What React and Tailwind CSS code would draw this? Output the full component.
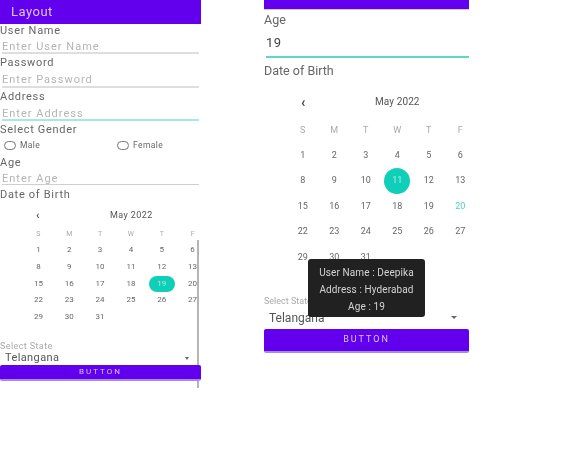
const weekdays = ["S", "M", "T", "W", "T", "F"];
const days = [
	[1, 2, 3, 4, 5, 6],
	[8, 9, 10, 11, 12, 13],
	[15, 16, 17, 18, 19, 20],
	[22, 23, 24, 25, 26, 27],
	[29, 30, 31],
];

function Field({ label, placeholder, line = "h-[2px] bg-[#dedede]", labelClass = "", inputClass }) {
	return (
		<div>
			<div className={`${labelClass} flex h-[12px] items-center pt-[2px] text-[11px] tracking-[0.7px] text-[#666]`}>
				{label}
			</div>
			<div className={`${inputClass} flex items-center pl-[2px] pt-[2px] text-[11px] tracking-[1px] text-[#b5b5b5]`}>
				{placeholder}
			</div>
			<div className={`mx-[2px] ${line}`} />
		</div>
	);
}

function Button({ className }) {
	return (
		<div
			className={`relative flex items-center justify-center rounded-[2px] border-b-2 border-[#a98ae8] bg-[#6200ee] text-[#d9c6f7] ${className}`}
		>
			BUTTON
		</div>
	);
}

function LeftCalendar() {
	return (
		<div className="w-[198px] overflow-hidden">
			<div className="flex h-[24px] w-[185px] items-center pt-[3px] text-[9px] text-[#555]">
				<span className="ml-[36px] w-[74px] text-[11px] font-bold leading-none">‹</span>
				<span className="tracking-[0.4px]">May 2022</span>
			</div>
			<div className="ml-[23px] grid h-[16px] w-[185px] grid-cols-6 items-center text-center text-[7px] text-[#aaa]">
				{weekdays.map((d, i) => (
					<span key={i}>{d}</span>
				))}
			</div>
			<div className="ml-[23px] grid w-[185px] grid-cols-6 grid-rows-[repeat(5,16.7px)] items-center text-center text-[8px] text-[#666]">
				{days.flat().map((d) => (
					<div key={d} className="relative flex h-full items-center justify-center">
						{d === 19 && <span className="absolute h-[16px] w-[26px] rounded-full bg-[#0fcfb8]" />}
						<span className={`relative ${d === 19 ? "text-[#a9ece3]" : ""}`}>{d}</span>
					</div>
				))}
			</div>
		</div>
	);
}

function RightCalendar() {
	return (
		<div className="pl-[23px]">
			<div className="flex h-[22px] items-center text-[10px] text-[#555]">
				<span className="ml-[14px] w-[74px] text-[14px] font-bold leading-none text-[#444]">‹</span>
				<span className="tracking-[0.1px]">May 2022</span>
			</div>
			<div className="mt-[8px] grid h-[20px] w-[189px] grid-cols-6 items-center text-center text-[9px] text-[#aaa]">
				{weekdays.map((d, i) => (
					<span key={i}>{d}</span>
				))}
			</div>
			<div className="mt-[2px] grid w-[189px] grid-cols-6 grid-rows-[repeat(5,25.5px)] items-center text-center text-[9px] text-[#666]">
				{days.flat().map((d) => (
					<div key={d} className="relative flex h-full items-center justify-center">
						{d === 11 && <span className="absolute h-[26px] w-[26px] rounded-full bg-[#0fcfb8]" />}
						<span className={`relative ${d === 11 ? "text-[#a9ece3]" : d === 20 ? "text-[#4ecfc0]" : ""}`}>{d}</span>
					</div>
				))}
			</div>
		</div>
	);
}

export default function App() {
	return (
		<div className="flex h-[452px] w-[571px] gap-[63px] overflow-hidden bg-white font-['Roboto',sans-serif] blur-[0.4px]">
			<div className="relative h-[388px] w-[201px]">
				<div className="flex h-[24px] items-center bg-[#6200ee] pl-[11px] text-[13px] tracking-[0.5px] text-[#d9c6f7]">
					Layout
				</div>
				<Field label="User Name" placeholder="Enter User Name" inputClass="mt-[4px] h-[12px]" />
				<Field label="Password" placeholder="Enter Password" labelClass="mt-[2px]" inputClass="mt-[5px] h-[13px]" />
				<Field
					label="Address"
					placeholder="Enter Address"
					line="h-[2px] bg-[#a6e9e0]"
					labelClass="mt-[2px]"
					inputClass="mt-[5px] h-[12px]"
				/>
				<div className="mt-[2px] flex h-[12px] items-center pt-[2px] text-[11px] tracking-[0.7px] text-[#666]">
					Select Gender
				</div>
				<div className="flex h-[20px] items-center text-[8.5px] text-[#666]">
					<span className="ml-[4px] h-[9px] w-[12px] rounded-full border border-[#777]" />
					<span className="ml-[4px] w-[97px] tracking-[0.4px]">Male</span>
					<span className="h-[9px] w-[12px] rounded-full border border-[#777]" />
					<span className="ml-[4px] tracking-[0.4px]">Female</span>
				</div>
				<Field
					label="Age"
					placeholder="Enter Age"
					line="h-px bg-[#cfcfcf]"
					labelClass="mt-[1px]"
					inputClass="mt-[4px] h-[12px]"
				/>
				<div className="mt-[3px] flex h-[13px] items-center pt-[2px] text-[11px] tracking-[0.7px] text-[#666]">
					Date of Birth
				</div>
				<div className="mt-[1px]">
					<LeftCalendar />
				</div>
				<div className="mt-[17px] flex h-[9px] items-center text-[9px] tracking-[0.4px] text-[#aaa]">Select State</div>
				<div className="flex h-[14px] items-center justify-between pl-[5px] pr-[12px] text-[11px] tracking-[0.4px] text-[#555]">
					<span>Telangana</span>
					<span className="h-0 w-0 border-x-[2px] border-t-[3px] border-x-transparent border-t-[#666]" />
				</div>
				<div className="absolute right-[2px] top-[240px] h-[148px] w-[2px] bg-[#b5b5b5]" />
				<Button className="h-[16px] text-[8px] tracking-[2px]" />
			</div>

			<div className="relative w-[205px]">
				<div className="h-[10px] border-b border-[#d9c6f7] bg-[#6200ee]" />
				<div className="flex h-[20px] items-center text-[12.5px] text-[#666]">Age</div>
				<div className="flex h-[26px] items-center pl-[2px] text-[13px] tracking-[0.5px] text-[#444]">19</div>
				<div className="ml-[2px] h-[1.5px] bg-[#5fd6c9]" />
				<div className="mt-[4px] flex h-[19px] items-center text-[12.5px] text-[#666]">Date of Birth</div>
				<div className="mt-[10px]">
					<RightCalendar />
				</div>
				<div className="mt-[25px] flex h-[14px] items-center text-[9px] text-[#aaa]">Select State</div>
				<div className="flex h-[17px] items-center justify-between pl-[5px] pr-[12px] text-[12px] text-[#555]">
					<span>Telangana</span>
					<span className="h-0 w-0 border-x-[3px] border-t-[3px] border-x-transparent border-t-[#666]" />
				</div>
				<div className="mt-[3px]">
					<Button className="h-[24px] text-[9px] tracking-[2px]" />
				</div>
				<div className="absolute left-[44px] top-[259px] flex h-[58px] w-[117px] flex-col items-center justify-center gap-[3px] rounded-[3px] bg-[#212121] pt-[4px] text-[10px] leading-[14px] tracking-[0.1px] text-[#d4d4d4]">
					<span>User Name : Deepika</span>
					<span>Address : Hyderabad</span>
					<span>Age : 19</span>
				</div>
			</div>
		</div>
	);
}
